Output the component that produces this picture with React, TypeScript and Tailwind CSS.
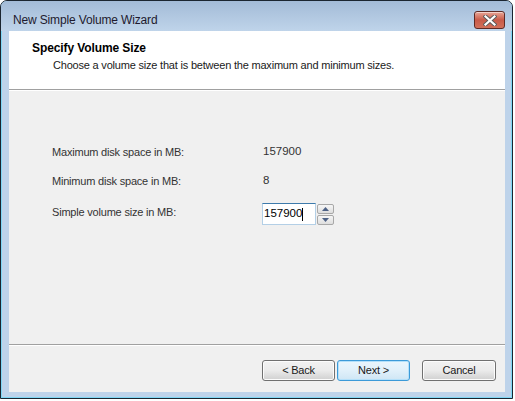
import React from "react";

const font = { fontFamily: '"Liberation Sans", Arial, sans-serif' };

const CloseButton: React.FC = () => (
    <div className="w-[31px] h-[18px] rounded-[3px] border border-[#5f2a24] bg-gradient-to-b from-[#e8a697] via-[#c85a48] to-[#d2705a] flex items-center justify-center shadow-[inset_0_1px_0_rgba(255,255,255,0.5)]">
        <svg width="14" height="11" viewBox="0 0 14 11">
            <path d="M2.5 1.5 L11.5 9.5 M11.5 1.5 L2.5 9.5" stroke="#5a5a5a" strokeWidth="4" strokeLinecap="square" />
            <path d="M2.5 1.5 L11.5 9.5 M11.5 1.5 L2.5 9.5" stroke="#ffffff" strokeWidth="2.2" strokeLinecap="square" />
        </svg>
    </div>
);

const WinButton: React.FC<{ label: string; focused?: boolean; className?: string }> = ({ label, focused, className }) => (
    <div
        className={`h-[21px] rounded-[3px] border flex items-center justify-center text-[11px] tracking-[-0.2px] text-[#1a1a1a] ${
            focused
                ? "border-[#3c9ad8] bg-gradient-to-b from-[#eaf6fd] via-[#e1f0fa] to-[#cfe6f5] shadow-[inset_0_0_0_1px_#b4e0fa]"
                : "border-[#707070] bg-gradient-to-b from-[#f2f2f2] via-[#ebebeb] to-[#d0d0d0] shadow-[inset_0_0_0_1px_#fcfcfc]"
        } ${className ?? ""}`}
    >
        {label}
    </div>
);

const Spinner: React.FC = () => (
    <div className="flex flex-col gap-[1px] ml-[1px] mt-[1px]">
        <div className="w-[17px] h-[10px] border border-[#a8a8a8] rounded-[2px] bg-gradient-to-b from-[#f6f6f6] to-[#dedede] flex items-center justify-center">
            <svg width="7" height="4" viewBox="0 0 7 4">
                <path d="M0 4 L3.5 0 L7 4 Z" fill="#4d6185" />
            </svg>
        </div>
        <div className="w-[17px] h-[10px] border border-[#a8a8a8] rounded-[2px] bg-gradient-to-b from-[#f6f6f6] to-[#dedede] flex items-center justify-center">
            <svg width="7" height="4" viewBox="0 0 7 4">
                <path d="M0 0 L3.5 4 L7 0 Z" fill="#4d6185" />
            </svg>
        </div>
    </div>
);

const App: React.FC = () => {
    const rows = [
        { label: "Maximum disk space in MB:", value: "157900" },
        { label: "Minimum disk space in MB:", value: "8" },
    ];

    return (
        <div className="w-[515px] h-[401px] bg-white overflow-hidden" style={font}>
            {/* window */}
            <div className="w-[513px] h-[399px] rounded-t-[7px] border border-[#1b2530] bg-[#bed3ea] flex flex-col shadow-[inset_0_0_0_1px_#7fd7f5]">
                {/* title bar */}
                <div className="h-[30px] shrink-0 rounded-t-[6px] bg-gradient-to-b from-[#a3bbd7] to-[#bfd4ea] flex items-start justify-between pl-[12px] pr-[7px]">
                    <span className="mt-[13px] text-[12px] tracking-[-0.15px] text-[#1e1a2e] leading-none">New Simple Volume Wizard</span>
                    <div className="mt-[10px]">
                        <CloseButton />
                    </div>
                </div>

                {/* client area */}
                <div className="ml-[8px] w-[496px] h-[361px] bg-[#f0f0f0] flex flex-col">
                    {/* header */}
                    <div className="h-[58px] bg-white pl-[23px] pt-[10px] shrink-0">
                        <div className="text-[12px] font-bold text-black leading-[14px] tracking-[-0.1px]">Specify Volume Size</div>
                        <div className="text-[11px] tracking-[-0.2px] text-[#1a1a1a] leading-[14px] pl-[21px] mt-[3px]">
                            Choose a volume size that is between the maximum and minimum sizes.
                        </div>
                    </div>
                    <div className="h-[1px] bg-[#a0a0a0]" />
                    <div className="h-[1px] bg-white" />

                    {/* body */}
                    <div className="h-[253px] shrink-0 pl-[43px] pt-[54px] flex flex-col text-[11px] tracking-[-0.2px] text-[#333]">
                        {rows.map((row) => (
                            <div key={row.label} className="flex items-center h-[14px] mb-[15px]">
                                <span className="w-[210px]">{row.label}</span>
                                <span className="pl-[1px] text-[11.5px] tracking-normal">{row.value}</span>
                            </div>
                        ))}
                        <div className="flex items-center">
                            <span className="w-[210px] -mt-[3px]">Simple volume size in MB:</span>
                            <div className="flex items-start">
                                <div className="w-[54px] h-[22px] border border-[#b3cfe6] border-t-[#3d7aab] bg-white flex items-center pl-[1px] text-[11.5px] tracking-normal text-[#000]">
                                    157900<span className="inline-block w-[1px] h-[13px] bg-black" />
                                </div>
                                <Spinner />
                            </div>
                        </div>
                    </div>

                    <div className="h-[1px] bg-[#a0a0a0]" />
                    <div className="h-[1px] bg-white" />

                    {/* buttons */}
                    <div className="flex pt-[14px] pl-[253px]">
                        <WinButton label="< Back" className="w-[73px]" />
                        <WinButton label="Next >" focused className="w-[73px] ml-[2px]" />
                        <WinButton label="Cancel" className="w-[74px] ml-[12px]" />
                    </div>
                </div>
            </div>
        </div>
    );
};

export default App;
